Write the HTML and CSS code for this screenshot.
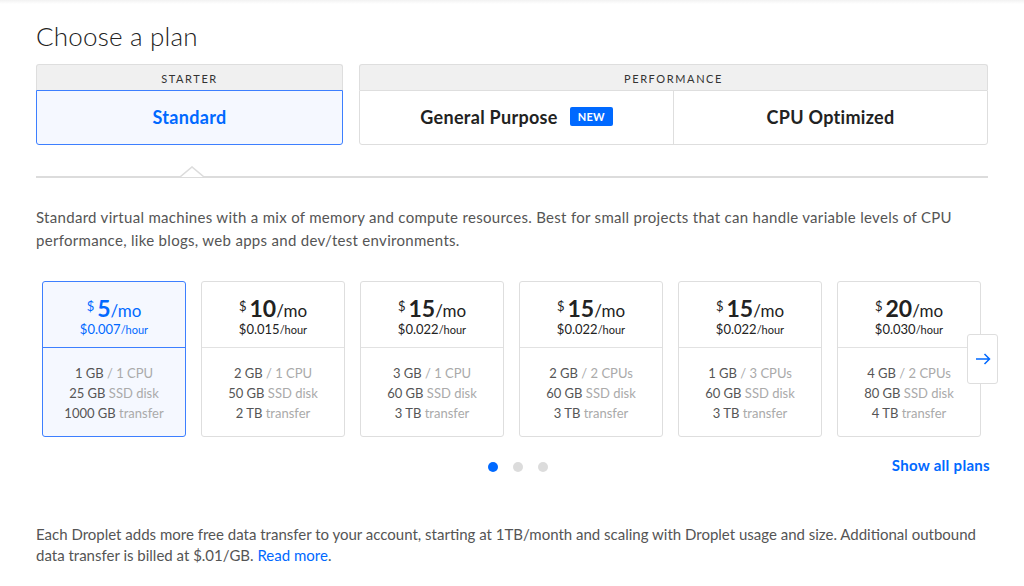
FILE: index.html
```html
<!DOCTYPE html>
<html>
<head>
<meta charset="utf-8">
<link rel="stylesheet" href="styles.css">
</head>
<body>
<div class="topshade"></div>
<main class="page">
  <h1 class="title">Choose a plan</h1>

  <div class="tabs">
    <div class="tabgroup starter">
      <div class="tabhead">STARTER</div>
      <div class="tabbody">
        <div class="tab active">Standard</div>
      </div>
    </div>
    <div class="tabgroup perf">
      <div class="tabhead">PERFORMANCE</div>
      <div class="tabbody">
        <div class="tab">General Purpose <span class="badge">NEW</span></div>
        <div class="tab divided">CPU Optimized</div>
      </div>
    </div>
  </div>

  <div class="rule">
    <svg class="caret" width="24" height="12" viewBox="0 0 24 12"><polyline points="0,11 12,1 24,11" fill="#fff" stroke="#dcdcdc" stroke-width="1.6"/></svg>
  </div>

  <p class="desc">Standard virtual machines with a mix of memory and compute resources. Best for small projects that can handle variable levels of CPU performance, like blogs, web apps and dev/test environments.</p>

  <div class="carousel">
    <div class="cards">
      <div class="card selected">
        <div class="price">
          <div class="mo"><span class="cur">$</span><span class="amt">5</span>/mo</div>
          <div class="hr">$0.007<span class="small">/hour</span></div>
        </div>
        <div class="specs">
          <div>1 GB <span class="lbl">/ 1 CPU</span></div>
          <div>25 GB <span class="lbl">SSD disk</span></div>
          <div>1000 GB <span class="lbl">transfer</span></div>
        </div>
      </div>
      <div class="card">
        <div class="price">
          <div class="mo"><span class="cur">$</span><span class="amt">10</span>/mo</div>
          <div class="hr">$0.015<span class="small">/hour</span></div>
        </div>
        <div class="specs">
          <div>2 GB <span class="lbl">/ 1 CPU</span></div>
          <div>50 GB <span class="lbl">SSD disk</span></div>
          <div>2 TB <span class="lbl">transfer</span></div>
        </div>
      </div>
      <div class="card">
        <div class="price">
          <div class="mo"><span class="cur">$</span><span class="amt">15</span>/mo</div>
          <div class="hr">$0.022<span class="small">/hour</span></div>
        </div>
        <div class="specs">
          <div>3 GB <span class="lbl">/ 1 CPU</span></div>
          <div>60 GB <span class="lbl">SSD disk</span></div>
          <div>3 TB <span class="lbl">transfer</span></div>
        </div>
      </div>
      <div class="card">
        <div class="price">
          <div class="mo"><span class="cur">$</span><span class="amt">15</span>/mo</div>
          <div class="hr">$0.022<span class="small">/hour</span></div>
        </div>
        <div class="specs">
          <div>2 GB <span class="lbl">/ 2 CPUs</span></div>
          <div>60 GB <span class="lbl">SSD disk</span></div>
          <div>3 TB <span class="lbl">transfer</span></div>
        </div>
      </div>
      <div class="card">
        <div class="price">
          <div class="mo"><span class="cur">$</span><span class="amt">15</span>/mo</div>
          <div class="hr">$0.022<span class="small">/hour</span></div>
        </div>
        <div class="specs">
          <div>1 GB <span class="lbl">/ 3 CPUs</span></div>
          <div>60 GB <span class="lbl">SSD disk</span></div>
          <div>3 TB <span class="lbl">transfer</span></div>
        </div>
      </div>
      <div class="card">
        <div class="price">
          <div class="mo"><span class="cur">$</span><span class="amt">20</span>/mo</div>
          <div class="hr">$0.030<span class="small">/hour</span></div>
        </div>
        <div class="specs">
          <div>4 GB <span class="lbl">/ 2 CPUs</span></div>
          <div>80 GB <span class="lbl">SSD disk</span></div>
          <div>4 TB <span class="lbl">transfer</span></div>
        </div>
      </div>
    </div>
    <button class="next" aria-label="Next">
      <svg width="16" height="12" viewBox="0 0 16 12"><path d="M1 6H14.5M9.5 1L14.5 6L9.5 11" fill="none" stroke="#0069ff" stroke-width="1.5"/></svg>
    </button>
  </div>

  <div class="pager">
    <div class="dots"><span class="dot on"></span><span class="dot"></span><span class="dot"></span></div>
    <a class="showall">Show all plans</a>
  </div>

  <p class="note">Each Droplet adds more free data transfer to your account, starting at 1TB/month and scaling with Droplet usage and size. Additional outbound data transfer is billed at $.01/GB. <a class="link">Read more</a>.</p>
</main>
</body>
</html>
```

FILE: styles.css
```css
* { box-sizing: border-box; }
html, body { margin: 0; padding: 0; background: #fff; }
body {
  font-family: Lato, "Open Sans", "Liberation Sans", sans-serif;
  color: #333;
  width: 1024px;
  height: 586px;
  overflow: hidden;
  position: relative;
}
.topshade {
  position: absolute; left: 0; top: 0; width: 100%; height: 4px;
  background: linear-gradient(#f2f2f2, #fff);
}
.page { padding: 21px 36px 0 36px; width: 1024px; }
.title {
  margin: 0;
  font-size: 26px;
  font-weight: 300;
  color: #222;
  line-height: 30px;
  letter-spacing: 0.2px;
}
.tabs { display: flex; gap: 16px; margin-top: 13px; }
.tabgroup { display: flex; flex-direction: column; }
.starter { width: 307px; }
.perf { flex: 1; }
.tabhead {
  height: 26px;
  background: #f0f0f0;
  border: 1px solid #dedede;
  border-bottom: none;
  border-radius: 3px 3px 0 0;
  font-size: 11px;
  letter-spacing: 1.6px;
  color: #333;
  display: flex; align-items: center; justify-content: center;
  padding-top: 1px;
}
.tabbody {
  display: flex;
  height: 55px;
  border: 1px solid #dedede;
  border-radius: 0 0 3px 3px;
  background: #fff;
}
.starter .tabbody { border-color: #3d7fff; background: #f5f8ff; }
.tab {
  flex: 1;
  display: flex; align-items: center; justify-content: center;
  padding-bottom: 2px;
  font-size: 18px;
  letter-spacing: 0.3px;
  font-weight: 700;
  color: #222;
}
.tab.active { color: #0069ff; }
.tab.divided { border-left: 1px solid #dedede; }
.badge {
  display: inline-block;
  margin-left: 12px;
  background: #0069ff;
  color: #fff;
  font-size: 11px;
  font-weight: 700;
  letter-spacing: 0.2px;
  padding: 3px 8px 3px;
  border-radius: 2px;
  line-height: 13px;
}
.rule {
  position: relative;
  margin-top: 31px;
  height: 2px;
  background: #dcdcdc;
}
.caret { position: absolute; left: 144px; top: -10px; }
.desc {
  margin: 28px 0 0 0;
  font-size: 15px;
  line-height: 23px;
  letter-spacing: 0.3px;
  color: #555;
}
.carousel { position: relative; margin-top: 29px; }
.cards { display: flex; gap: 15px; padding-left: 6px; }
.card {
  width: 144px;
  height: 156px;
  border: 1px solid #dedede;
  border-radius: 3px;
  display: flex; flex-direction: column;
  background: #fff;
}
.price {
  height: 66px;
  border-bottom: 1px solid #e2e2e2;
  display: flex; flex-direction: column; align-items: center;
  padding-top: 15px;
  color: #222;
}
.mo { font-size: 17px; line-height: 22px; display: flex; align-items: baseline; }
.cur { font-size: 13px; align-self: flex-start; margin-right: 3px; line-height: 18px; }
.amt { font-size: 23px; font-weight: 700; }
.hr { font-size: 13px; line-height: 16px; margin-top: -1px; }
.small { font-size: 11px; }
.specs {
  flex: 1;
  padding-top: 15px;
  text-align: center;
  font-size: 13px;
  line-height: 20px;
  color: #555;
}
.lbl { color: #aaa; }
.card.selected { border-color: #3d7fff; background: #f5f8ff; }
.card.selected .price { color: #0069ff; border-bottom-color: #3d7fff; }
.next {
  position: absolute;
  left: 931px; top: 53px;
  width: 31px; height: 50px;
  border: 1px solid #dedede;
  border-radius: 3px;
  background: #fff;
  padding: 0;
  display: flex; align-items: center; justify-content: center;
}
.pager {
  display: flex; align-items: center; justify-content: space-between;
  margin-top: 18px;
  padding-left: 452px;
  margin-right: -2px;
  height: 20px;
}
.dots { display: flex; gap: 15px; padding-top: 3px; }
.dot { width: 10px; height: 10px; border-radius: 50%; background: #dcdcdc; display: block; }
.dot.on { background: #0069ff; }
.showall { color: #0069ff; font-weight: 700; font-size: 15px; letter-spacing: 0.3px; }
.note {
  margin: 49px 0 0 0;
  font-size: 15px;
  line-height: 21px;
  color: #555;
}
.link { color: #0069ff; }
```
